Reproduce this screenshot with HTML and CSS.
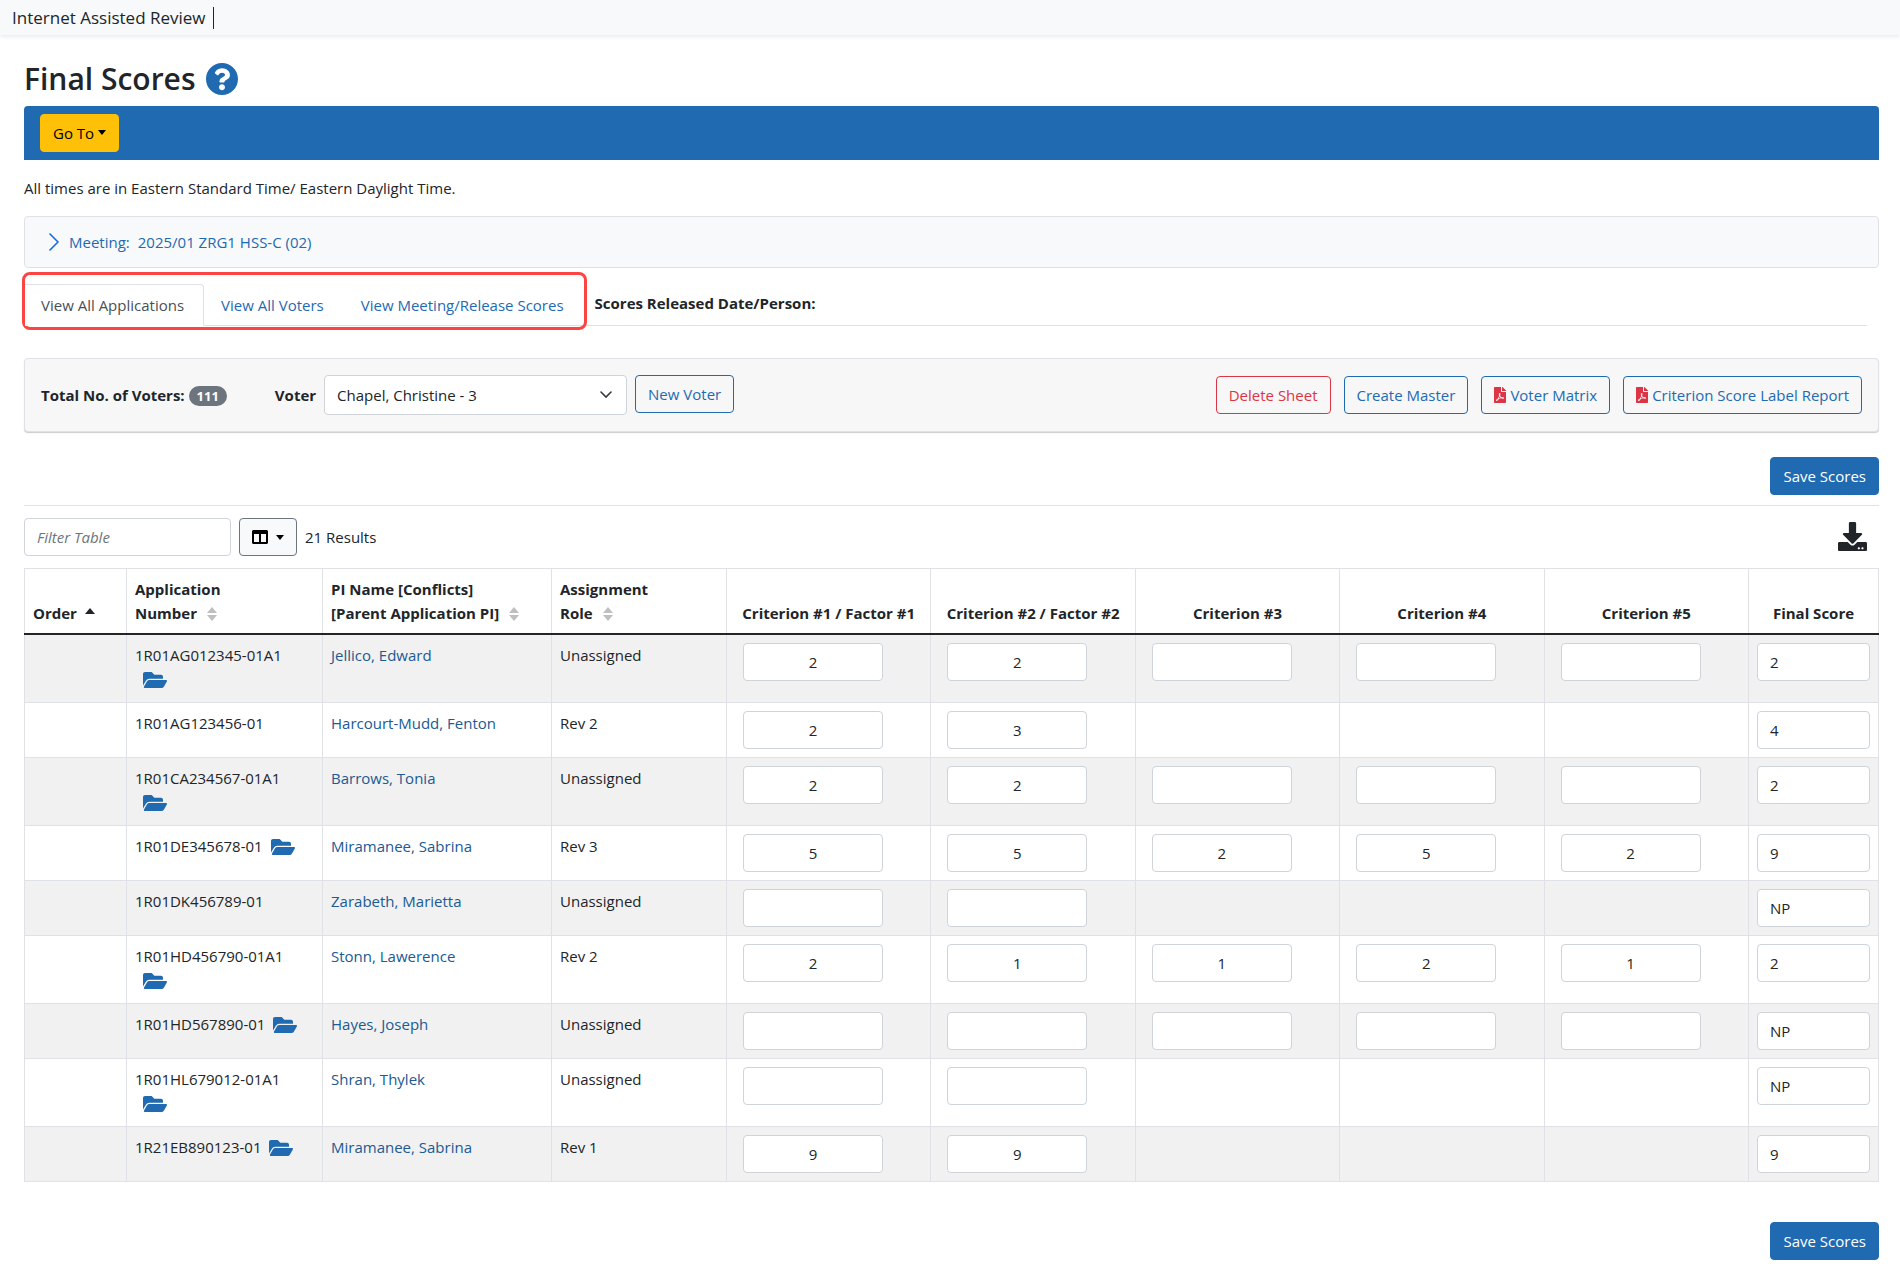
FILE: index.html
```html
<!DOCTYPE html>
<html lang="en">
<head>
<meta charset="utf-8">
<meta name="viewport" content="width=device-width, initial-scale=1">
<title>Final Scores</title>
<link rel="stylesheet" href="styles.css">
</head>
<body>
<svg class="sprite" aria-hidden="true">
  <symbol id="i-folder" viewBox="0 64 576 384"><path d="M572.694 292.093L500.27 416.248A63.997 63.997 0 0 1 444.989 448H45.025c-18.523 0-30.064-20.093-20.731-36.093l72.424-124.155A64 64 0 0 1 152 256h399.964c18.523 0 30.064 20.093 20.73 36.093zM152 224h328v-48c0-26.51-21.49-48-48-48H272l-64-64H48C21.49 64 0 85.49 0 112v278.046l69.077-118.418C86.214 242.25 117.989 224 152 224z"/></symbol>
  <symbol id="i-help" viewBox="8 8 496 496"><path d="M504 256c0 136.997-111.043 248-248 248S8 392.997 8 256C8 119.083 119.043 8 256 8s248 111.083 248 248zM262.655 90c-54.497 0-89.255 22.957-116.549 63.758-3.536 5.286-2.353 12.415 2.715 16.258l34.699 26.31c5.205 3.947 12.621 3.008 16.665-2.122 17.864-22.658 30.113-35.797 57.303-35.797 20.429 0 45.698 13.148 45.698 32.958 0 14.976-12.363 22.667-32.534 33.976C247.128 238.528 216 254.941 216 296v4c0 6.627 5.373 12 12 12h56c6.627 0 12-5.373 12-12v-1.333c0-28.462 83.186-29.647 83.186-106.667 0-58.002-60.165-102-116.531-102zM256 338c-25.365 0-46 20.635-46 46 0 25.364 20.635 46 46 46s46-20.636 46-46c0-25.365-20.635-46-46-46z"/></symbol>
  <symbol id="i-pdf" viewBox="0 0 384 512"><path d="M181.9 256.1c-5-16-4.9-46.9-2-46.9 8.4 0 7.6 36.9 2 46.9zm-1.7 47.2c-7.7 20.2-17.3 43.3-28.4 62.7 18.3-7 39-17.2 62.9-21.9-12.7-9.6-24.9-23.4-34.5-40.8zM86.1 428.1c0 .8 13.2-5.4 34.9-40.2-6.7 6.3-29.1 24.5-34.9 40.2zM248 160h136v328c0 13.3-10.7 24-24 24H24c-13.3 0-24-10.7-24-24V24C0 10.7 10.7 0 24 0h200v136c0 13.2 10.8 24 24 24zm-8 171.8c-20-12.2-33.3-29-42.7-53.8 4.5-18.5 11.6-46.6 6.2-64.2-4.7-29.4-42.4-26.5-47.8-6.8-5 18.3-.4 44.1 8.1 77-11.6 27.6-28.7 64.6-40.8 85.8-.1 0-.1.1-.2.1-27.1 13.9-73.6 44.5-54.5 68 5.6 6.9 16 10 21.5 10 17.9 0 35.7-18 61.1-61.8 25.8-8.5 54.1-19.1 79-23.2 21.7 11.8 47.1 19.5 64 19.5 29.2 0 31.2-32 19.7-43.4-13.9-13.6-54.3-9.7-73.6-7.2zM377 105L279 7c-4.5-4.5-10.6-7-17-7h-6v128h128v-6.1c0-6.3-2.5-12.4-7-16.9zm-74.1 255.3c4.1-2.7-2.5-11.9-42.8-9 37.1 15.8 42.8 9 42.8 9z"/></symbol>
  <symbol id="i-columns" viewBox="0 0 512 512"><path d="M464 32H48C21.49 32 0 53.49 0 80v352c0 26.51 21.49 48 48 48h416c26.51 0 48-21.49 48-48V80c0-26.51-21.49-48-48-48zM224 416H64V160h160v256zm224 0H288V160h160v256z"/></symbol>
  <symbol id="i-download" viewBox="0 0 512 512"><path d="M216 0h80c13.3 0 24 10.7 24 24v168h87.7c17.8 0 26.7 21.5 14.1 34.1L269.7 378.3c-7.5 7.5-19.8 7.5-27.3 0L90.1 226.1c-12.6-12.6-3.7-34.1 14.1-34.1H192V24c0-13.3 10.7-24 24-24zm296 376v112c0 13.3-10.7 24-24 24H24c-13.3 0-24-10.7-24-24V376c0-13.3 10.7-24 24-24h146.7l49 49c20.1 20.1 52.5 20.1 72.6 0l49-49H488c13.3 0 24 10.7 24 24zm-124 88c0-11-9-20-20-20s-20 9-20 20 9 20 20 20 20-9 20-20zm64 0c0-11-9-20-20-20s-20 9-20 20 9 20 20 20 20-9 20-20z"/></symbol>
  <symbol id="i-sort" viewBox="0 0 10 14"><path d="M5 0l5 6H0zM5 14l5-6H0z"/></symbol>
  <symbol id="i-up" viewBox="0 0 10 6"><path d="M5 0l5 6H0z"/></symbol>
  <symbol id="i-down" viewBox="0 0 8 5"><path d="M0 0h8L4 5z"/></symbol>
  <symbol id="i-chevron" viewBox="0 0 10 18"><path d="M1 1l8 8-8 8" fill="none" stroke="currentColor" stroke-width="1.6" stroke-linecap="round" stroke-linejoin="round"/></symbol>
</svg>

<header class="navbar">
  <span class="brand">Internet Assisted Review</span>
</header>

<main class="page">
  <div class="title-row">
    <h1>Final Scores</h1>
    <a class="help" href="#help" aria-label="Help"><svg><use href="#i-help"/></svg></a>
  </div>

  <nav class="menu-bar" aria-label="Page menu">
    <button class="btn btn-warning" type="button">Go To <svg class="caret"><use href="#i-down"/></svg></button>
  </nav>

  <p class="note">All times are in Eastern Standard Time/ Eastern Daylight Time.</p>

  <button class="meeting" type="button" aria-expanded="false">
    <svg class="chevron"><use href="#i-chevron"/></svg>
    <span>Meeting:</span><span>2025/01 ZRG1 HSS-C (02)</span>
  </button>

  <div class="tab-row">
    <nav class="tabs" aria-label="Views">
      <a class="tab active" href="#applications" aria-current="page">View All Applications</a>
      <a class="tab" href="#voters">View All Voters</a>
      <a class="tab" href="#meeting">View Meeting/Release Scores</a>
    </nav>
    <strong class="released">Scores Released Date/Person:</strong>
  </div>

  <section class="toolbar" aria-label="Voter tools">
    <strong class="total">Total No. of Voters: <span class="badge">111</span></strong>
    <div class="voter">
      <label for="voter">Voter</label>
      <select id="voter"><option>Chapel, Christine - 3</option></select>
      <button class="btn btn-outline" type="button">New Voter</button>
    </div>
    <div class="actions">
      <button class="btn btn-danger" type="button">Delete Sheet</button>
      <button class="btn btn-outline" type="button">Create Master</button>
      <button class="btn btn-outline" type="button"><svg class="pdf"><use href="#i-pdf"/></svg>Voter Matrix</button>
      <button class="btn btn-outline" type="button"><svg class="pdf"><use href="#i-pdf"/></svg>Criterion Score Label Report</button>
    </div>
  </section>

  <div class="save-row">
    <button class="btn btn-primary" type="button">Save Scores</button>
  </div>

  <div class="filter-row">
    <input class="field filter" type="text" placeholder="Filter Table" aria-label="Filter Table">
    <button class="btn btn-light" type="button" aria-label="Choose columns"><svg class="columns"><use href="#i-columns"/></svg><svg class="caret"><use href="#i-down"/></svg></button>
    <span>21 Results</span>
    <button class="download" type="button" aria-label="Download table"><svg><use href="#i-download"/></svg></button>
  </div>

  <table class="scores">
    <colgroup>
      <col class="c-order"><col class="c-app"><col class="c-name"><col class="c-role">
      <col><col><col><col><col>
      <col class="c-final">
    </colgroup>
    <thead>
      <tr>
        <th scope="col">Order <svg class="up"><use href="#i-up"/></svg></th>
        <th scope="col">Application<br>Number <svg class="sort"><use href="#i-sort"/></svg></th>
        <th scope="col">PI Name [Conflicts]<br>[Parent Application PI] <svg class="sort"><use href="#i-sort"/></svg></th>
        <th scope="col">Assignment<br>Role <svg class="sort"><use href="#i-sort"/></svg></th>
        <th scope="col" class="mid">Criterion #1 / Factor #1</th>
        <th scope="col" class="mid">Criterion #2 / Factor #2</th>
        <th scope="col" class="mid">Criterion #3</th>
        <th scope="col" class="mid">Criterion #4</th>
        <th scope="col" class="mid">Criterion #5</th>
        <th scope="col" class="mid">Final Score</th>
      </tr>
    </thead>
    <tbody id="rows"></tbody>
  </table>

  <div class="save-row bottom">
    <button class="btn btn-primary" type="button">Save Scores</button>
  </div>
</main>
<script src="scores.js"></script>
</body>
</html>
```
FILE: styles.css
```css
* { box-sizing: border-box; }

body {
  margin: 0;
  background: #fff;
  color: #212529;
  font: 15px/24px "Open Sans", "Noto Sans", sans-serif;
}

button, input, select { font: inherit; color: inherit; }
button { cursor: pointer; }
a { color: #1f6ab1; text-decoration: none; }
svg { fill: currentColor; }
strong, label { font-weight: 700; }
.sprite { display: none; }

.navbar {
  display: flex;
  align-items: center;
  height: 35px;
  padding: 0 12px;
  background: #f8f9fa;
  box-shadow: 0 2px 4px rgba(0, 0, 0, .08);
}
.brand {
  padding-right: 8px;
  border-right: 1px solid #212529;
  font-size: 17px;
  line-height: 22px;
  font-weight: 500;
}

.page { padding: 24px 21px 12px 24px; }

.title-row { display: flex; align-items: center; gap: 10px; height: 39px; margin-bottom: 8px; }
h1 { margin: 0; font-size: 30px; line-height: 38px; font-weight: 600; }
.help, .help svg { display: block; width: 32px; height: 32px; }

.menu-bar {
  display: flex;
  padding: 8px 16px;
  background: #1f6ab1;
  border-radius: 4px 4px 0 0;
}

.btn {
  display: inline-flex;
  align-items: center;
  height: 38px;
  padding: 0 12px;
  border: 1px solid transparent;
  border-radius: 4px;
  background: transparent;
  white-space: nowrap;
}
.btn-warning { background: #ffc107; border-color: #ffc107; color: #000; }
.btn-primary { background: #1f6ab1; border-color: #1f6ab1; color: #fff; }
.btn-outline { border-color: #1f6ab1; color: #1f6ab1; }
.btn-danger { border-color: #dc3545; color: #dc3545; }
.btn-light { gap: 8px; border-color: #6c757d; background: #f8f9fa; color: #000; }
.caret { width: 8px; height: 5px; }
.btn-warning .caret { margin: 0 0 2px 4px; }

.note { margin: 16px 0; }

.meeting {
  display: flex;
  align-items: center;
  gap: 8px;
  width: 100%;
  height: 52px;
  padding: 0 24px;
  border: 1px solid #dee2e6;
  border-radius: 4px;
  background: #f8f9fa;
  color: #1f6ab1;
}
.chevron { width: 10px; height: 18px; margin-right: 2px; color: #1668dc; }

.tab-row {
  display: flex;
  align-items: center;
  height: 58px;
  margin: 4px 12px 0 -2px;
  background: linear-gradient(#dee2e6, #dee2e6) 2px 53px / 100% 1px no-repeat;
}
.tabs {
  display: flex;
  height: 58px;
  padding-top: 9px;
  border: 3px solid #fb4444;
  border-radius: 8px;
}
.tab { height: 42px; padding: 8px 19px 8px 16px; border: 1px solid transparent; }
.tab.active {
  border-color: #dee2e6 #dee2e6 #fff;
  border-left-width: 0;
  border-radius: 0 4px 0 0;
  background: #fff;
  color: #495057;
}
.released { margin: 4px 0 0 8px; }

.toolbar {
  display: flex;
  align-items: center;
  height: 74px;
  margin-top: 28px;
  padding: 0 16px;
  border: 1px solid #dee2e6;
  border-radius: 4px;
  background: #f7f7f7;
  box-shadow: 0 1px 1px rgba(0, 0, 0, .2);
}
.badge {
  display: inline-block;
  padding: 0 8px;
  border-radius: 10px;
  background: #6c757d;
  color: #fff;
  font-size: 13px;
  line-height: 20px;
}
.voter { display: flex; align-items: flex-start; gap: 8px; margin-left: 48px; }
.voter label { line-height: 40px; }
select {
  width: 303px;
  height: 40px;
  padding: 0 12px;
  border: 1px solid #ced4da;
  border-radius: 4px;
  appearance: none;
  background: #fff url("data:image/svg+xml,%3Csvg xmlns='http://www.w3.org/2000/svg' viewBox='0 0 12 12'%3E%3Cpath d='M1 3l5 5 5-5' fill='none' stroke='%23343a40' stroke-width='1.6' stroke-linecap='round'/%3E%3C/svg%3E") right 14px center / 12px 12px no-repeat;
}
.actions { display: flex; gap: 13px; margin-left: auto; }
.pdf { width: 12px; height: 16px; margin-right: 4px; color: #dc3545; }

.save-row { display: flex; justify-content: flex-end; margin-top: 25px; }
.save-row.bottom { margin-top: 40px; }

.filter-row {
  display: flex;
  align-items: center;
  gap: 8px;
  height: 63px;
  margin-top: 10px;
  border-top: 1px solid #dee2e6;
}
.field {
  width: 100%;
  height: 38px;
  padding: 0 12px;
  border: 1px solid #ced4da;
  border-radius: 4px;
  background: #fff;
}
.filter { width: 207px; }
.filter::placeholder { color: #6c757d; font-style: italic; opacity: 1; }
.columns { width: 16px; height: 16px; }
.download { margin-left: auto; padding: 0 12px 2px; border: 0; background: none; }
.download svg { display: block; width: 29px; height: 29px; }

.scores { width: 100%; border-collapse: collapse; table-layout: fixed; }
.c-order { width: 102px; }
.c-app { width: 196px; }
.c-name { width: 229px; }
.c-role { width: 175px; }
.c-final { width: 130px; }
.scores th, .scores td { padding: 8px; border: 1px solid #dee2e6; vertical-align: top; }
.scores th {
  height: 65px;
  border-bottom: 2px solid #212529;
  vertical-align: bottom;
  text-align: left;
  font-weight: 700;
  white-space: nowrap;
}
.scores th.mid { text-align: center; }
.scores td { height: 55px; }
.scores tr.tall td { height: 68px; }
.scores tbody tr:nth-child(odd) { background: #f1f1f1; }
.scores td a { color: #205a93; }
.scores .criterion { padding-left: 16px; }
.criterion .field { width: 140px; text-align: center; }
.number { white-space: nowrap; }
.tall .number { display: block; }
.scores td .folder { display: inline-block; margin-left: 8px; color: #1f6ab1; vertical-align: -3px; }
.folder svg { display: block; width: 24px; height: 16px; }
.sort { width: 10px; height: 14px; margin-left: 6px; color: #bfbfbf; vertical-align: -2px; }
.up { width: 10px; height: 6px; margin-left: 4px; vertical-align: 5px; }
```
FILE: scores.js
```js
// Score entries: null means the criterion does not apply to the application.
const rows = [
  ["1R01AG012345-01A1", true, "Jellico, Edward", "Unassigned", ["2", "2", "", "", ""], "2"],
  ["1R01AG123456-01", false, "Harcourt-Mudd, Fenton", "Rev 2", ["2", "3", null, null, null], "4"],
  ["1R01CA234567-01A1", true, "Barrows, Tonia", "Unassigned", ["2", "2", "", "", ""], "2"],
  ["1R01DE345678-01", true, "Miramanee, Sabrina", "Rev 3", ["5", "5", "2", "5", "2"], "9"],
  ["1R01DK456789-01", false, "Zarabeth, Marietta", "Unassigned", ["", "", null, null, null], "NP"],
  ["1R01HD456790-01A1", true, "Stonn, Lawerence", "Rev 2", ["2", "1", "1", "2", "1"], "2"],
  ["1R01HD567890-01", true, "Hayes, Joseph", "Unassigned", ["", "", "", "", ""], "NP"],
  ["1R01HL679012-01A1", true, "Shran, Thylek", "Unassigned", ["", "", null, null, null], "NP"],
  ["1R21EB890123-01", true, "Miramanee, Sabrina", "Rev 1", ["9", "9", null, null, null], "9"]
];

const field = (label, value) =>
  `<input class="field" type="text" aria-label="${label}" value="${value}">`;

document.getElementById("rows").innerHTML = rows.map(([number, folder, name, role, scores, final]) => {
  const link = folder
    ? `<a class="folder" href="#folder" aria-label="Open folder for ${number}"><svg><use href="#i-folder"/></svg></a>`
    : "";
  const cells = scores.map((score, i) =>
    `<td class="criterion">${score === null ? "" : field(`Criterion ${i + 1} for ${number}`, score)}</td>`).join("");
  return `<tr class="${number.endsWith("A1") ? "tall" : ""}"><td></td>
    <td><span class="number">${number}</span>${link}</td>
    <td><a href="#pi">${name}</a></td><td>${role}</td>${cells}
    <td>${field(`Final score for ${number}`, final)}</td></tr>`;
}).join("");
```
